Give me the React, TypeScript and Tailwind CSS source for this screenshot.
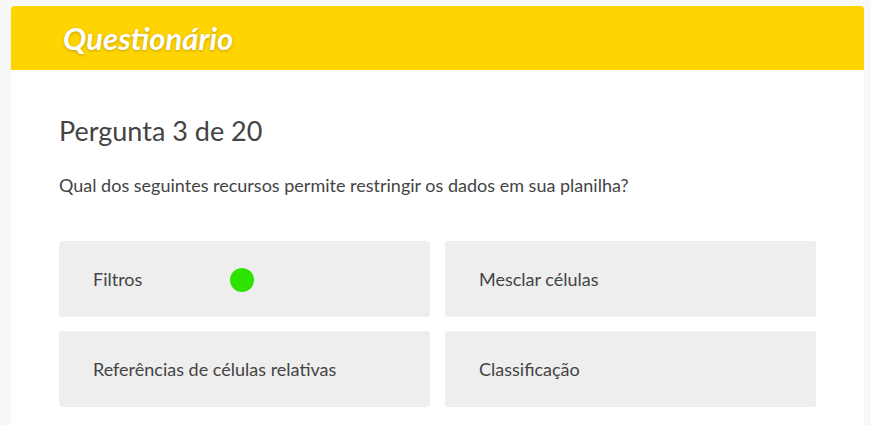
import React from "react";

const font = { fontFamily: "Lato, 'Open Sans', sans-serif" };

function Option({ label, dot }: { label: string; dot?: boolean }) {
  return (
    <div className="relative flex h-[76px] items-center rounded-[3px] bg-[#eeeeee] pl-[34px] text-[18px] text-[#444444]">
      <span>{label}</span>
      {dot && (
        <span className="absolute left-[171px] top-[27px] h-6 w-6 rounded-full bg-[#2de400]" />
      )}
    </div>
  );
}

export default function App() {
  return (
    <div className="min-h-[425px] w-[871px] bg-[#f8f8f8] pt-[6px]" style={font}>
      <div className="ml-[11px] w-[853px] overflow-hidden rounded-[4px] bg-white shadow-[0_0_2px_rgba(0,0,0,0.06)]">
        <div className="flex h-[64px] items-center bg-[#ffd400] pl-[52px]">
          <h1 className="text-[31px] font-bold italic text-white [text-shadow:0_1px_3px_rgba(0,0,0,0.25)]">
            Questionário
          </h1>
        </div>
        <div className="px-12 pt-[41px] pb-6">
          <h2 className="text-[27px] leading-[40px] text-[#444444]">Pergunta 3 de 20</h2>
          <p className="mt-[22px] text-[18px] leading-6 text-[#444444]">
            Qual dos seguintes recursos permite restringir os dados em sua planilha?
          </p>
          <div className="mt-[44px] grid grid-cols-2 gap-x-[15px] gap-y-[14px]">
            <Option label="Filtros" dot />
            <Option label="Mesclar células" />
            <Option label="Referências de células relativas" />
            <Option label="Classificação" />
          </div>
        </div>
      </div>
    </div>
  );
}
